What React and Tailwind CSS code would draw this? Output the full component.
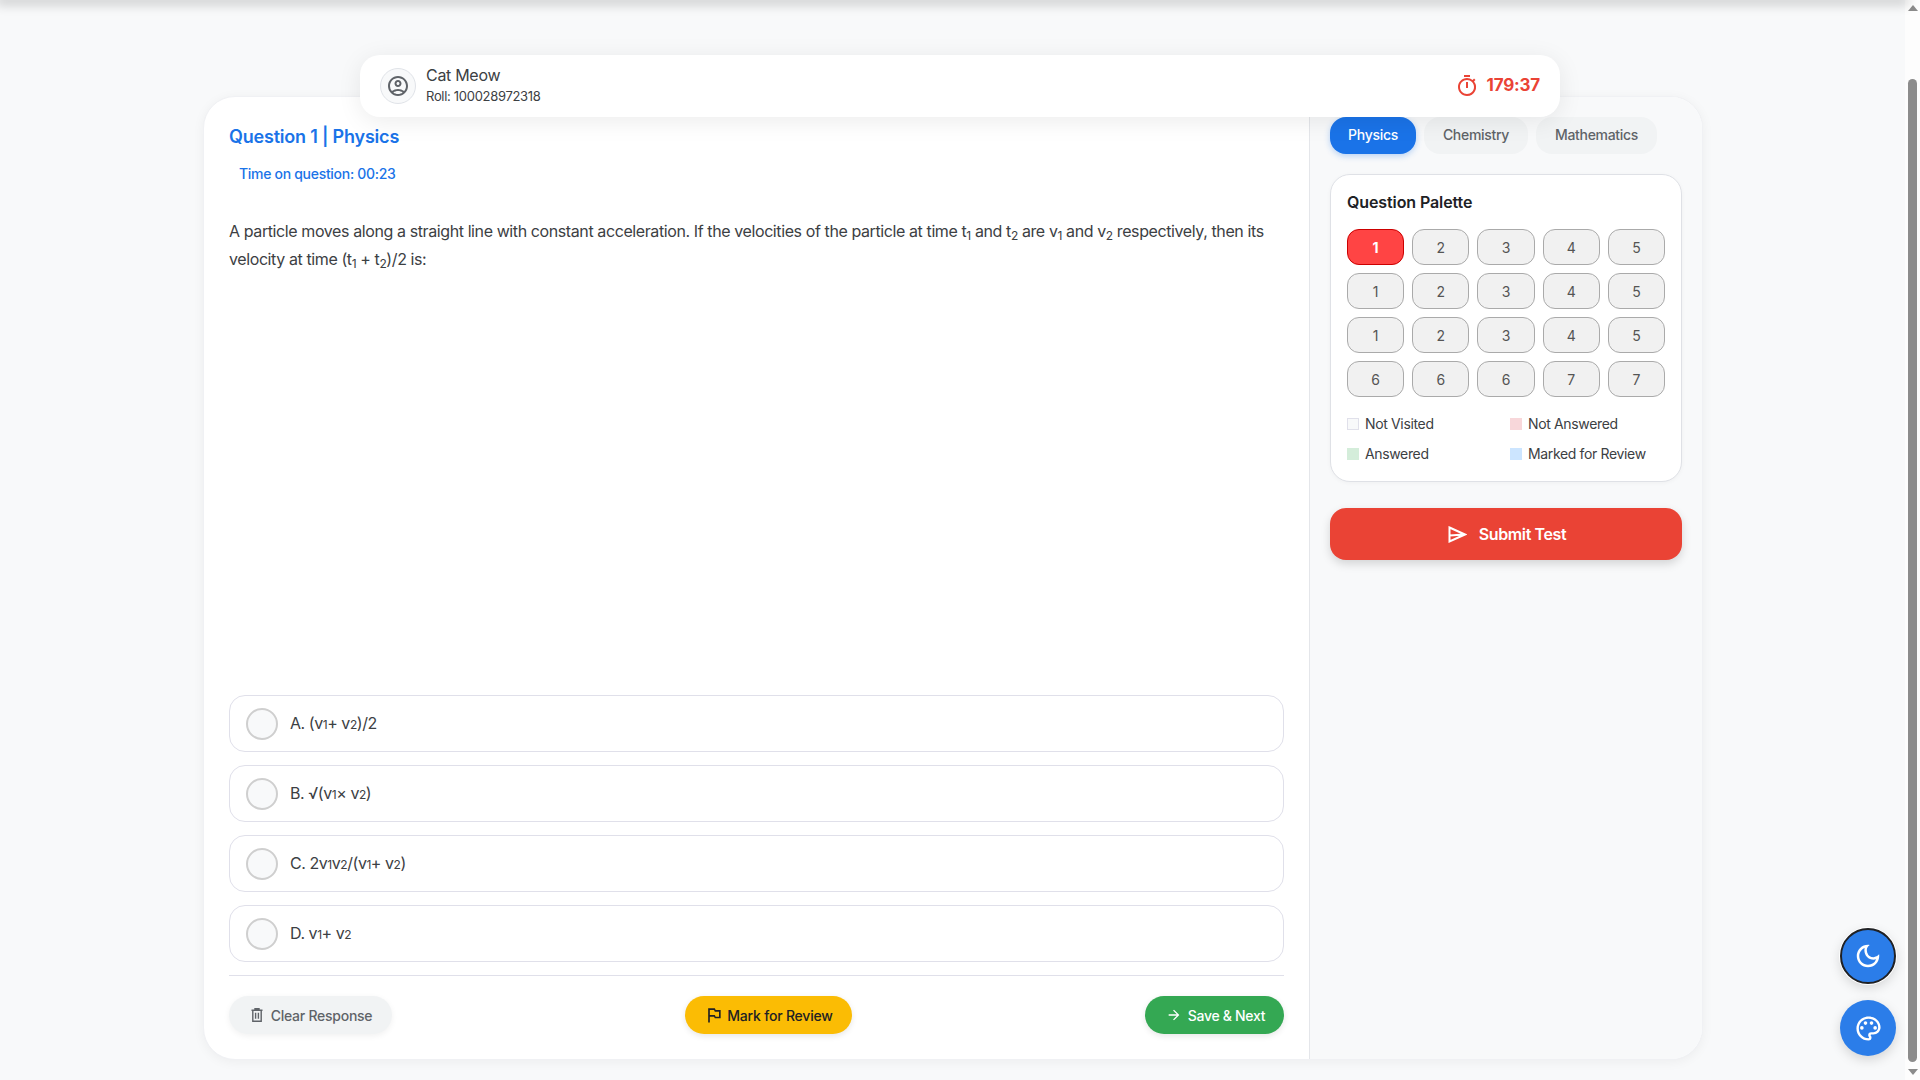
import {
  MdArrowForward,
  MdOutlineAccountCircle,
  MdOutlineDarkMode,
  MdOutlinedFlag,
  MdOutlinePalette,
  MdOutlineTimer,
} from "react-icons/md";

const rows = [
  [1, 2, 3, 4, 5],
  [1, 2, 3, 4, 5],
  [1, 2, 3, 4, 5],
  [6, 6, 6, 7, 7],
];

function V({ n }) {
  return (
    <>
      v<span className="text-[12px]">{n}</span>
    </>
  );
}

const options = [
  <>A. (<V n="1" />+ <V n="2" />)/2</>,
  <>B. √(<V n="1" />× <V n="2" />)</>,
  <>C. 2<V n="1" /><V n="2" />/(<V n="1" />+ <V n="2" />)</>,
  <>D. <V n="1" />+ <V n="2" /></>,
];

const legend = [
  ["Not Visited", "bg-[#f8f9fa] border-[#e0e0ea]"],
  ["Not Answered", "bg-[#f8d7da] border-[#f8d7da]"],
  ["Answered", "bg-[#d4edda] border-[#d4edda]"],
  ["Marked for Review", "bg-[#cce5ff] border-[#cce5ff]"],
];

function TrashIcon() {
  return (
    <svg width="12" height="14" viewBox="0 0 12 14" fill="none" stroke="currentColor" strokeWidth="1.4">
      <path d="M0.5 2.2h11M4 2.2V0.8h4v1.4M1.8 2.2V13.2h8.4V2.2M4.6 4.8v6M7.4 4.8v6" />
    </svg>
  );
}

function SendIcon() {
  return (
    <svg width="19" height="17" viewBox="0 0 19 17" fill="none" stroke="currentColor" strokeWidth="2" strokeLinejoin="miter">
      <path d="M1.5 1.5L17 8.5L1.5 15.5ZM1.5 9.5L16 8.5" />
    </svg>
  );
}

export default function App() {
  return (
    <div className="relative flex h-screen overflow-hidden bg-[#f8f9fa] font-['Inter',sans-serif] text-[#202124]">
      <main className="relative flex-1">
        {/* top bar shadow */}
        <div className="h-0 w-full shadow-[0_0_12px_4px_rgba(0,0,0,0.22)]" />

        {/* Candidate header */}
        <header className="relative z-10 ml-[360px] mt-[55px] flex h-[62px] w-[1200px] items-center justify-between rounded-[20px] bg-white pl-5 pr-5 shadow-[0_4px_24px_rgba(0,0,0,0.08)]">
          <div className="flex items-center gap-[10px]">
            <div className="flex h-9 w-9 items-center justify-center rounded-full border border-[#e0e3e8] bg-[#f8f9fa] text-[#5f6368]">
              <MdOutlineAccountCircle size={24} />
            </div>
            <div className="flex flex-col pb-[2px]">
              <span className="text-[16px] leading-[22px] tracking-[-0.3px] text-[#3c4043]">Cat Meow</span>
              <span className="text-[13px] leading-[20px] tracking-[-0.3px] text-[#3c4043]">Roll: 100028972318</span>
            </div>
          </div>
          <div className="flex items-center gap-2 text-[#ea4335]">
            <MdOutlineTimer size={24} />
            <span className="text-[17px] font-bold tracking-[-0.2px]">179:37</span>
          </div>
        </header>

        {/* Test card */}
        <div className="-mt-[21px] ml-[203px] flex h-[964px] w-[1500px] overflow-hidden rounded-[32px] border border-[#f0f1f4] bg-white shadow-[0_2px_12px_rgba(0,0,0,0.05)]">
          {/* Question column */}
          <section className="flex w-[1105px] flex-col pb-[25px] pl-[25px] pr-[25px] pt-[28px]">
            <h2 className="text-[18px] font-semibold leading-6 tracking-[-0.2px] text-[#1a73e8]">Question 1 | Physics</h2>
            <p className="ml-[10px] mt-[15px] text-[14px] font-medium leading-5 tracking-[-0.3px] text-[#1a73e8]">Time on question: 00:23</p>
            <p className="mt-[33px] text-[16px] leading-[28px] tracking-[-0.4px] text-[#3c4043]">
              A particle moves along a straight line with constant acceleration. If the velocities of the particle at time t<sub>1</sub> and t<sub>2</sub> are v<sub>1</sub> and v<sub>2</sub> respectively, then its velocity at time (t<sub>1</sub> + t<sub>2</sub>)/2 is:
            </p>

            <div className="mt-auto flex flex-col gap-[13px]">
              {options.map((opt, i) => (
                <div key={i} className="flex h-[57px] items-center gap-3 rounded-2xl border border-[#e0e0ea] bg-white pl-4 text-[16px] tracking-[-0.45px] text-[#3c4043]">
                  <span className="h-8 w-8 rounded-full border-2 border-[#cfcfcf] bg-[#f8f9fa]" />
                  <span className="pb-[2px]">{opt}</span>
                </div>
              ))}
            </div>

            <div className="mt-[13px] border-t border-[#e0e0ea] pt-[20px]">
              <div className="flex items-center justify-between">
                <button className="flex h-[38px] w-[163px] items-center justify-center gap-2 rounded-full bg-[#f1f3f4] pl-[2px] text-[14px] font-medium tracking-[-0.25px] text-[#5f6368] shadow-[0_2px_6px_rgba(0,0,0,0.06)]">
                  <TrashIcon />
                  Clear Response
                </button>
                <button className="flex h-[38px] w-[167px] items-center justify-center gap-[3px] rounded-full bg-[#fbbc04] text-[14px] font-medium tracking-[-0.2px] text-[#202124] shadow-[0_2px_6px_rgba(0,0,0,0.1)]">
                  <MdOutlinedFlag size={20} />
                  Mark for Review
                </button>
                <button className="flex h-[38px] w-[139px] items-center justify-center gap-[6px] rounded-full bg-[#34a853] pl-[2px] text-[14px] font-medium tracking-[-0.3px] text-white shadow-[0_2px_6px_rgba(0,0,0,0.1)]">
                  <MdArrowForward size={16} />
                  Save &amp; Next
                </button>
              </div>
            </div>
          </section>

          {/* Side panel */}
          <aside className="flex flex-1 flex-col border-l border-[#e4e6ea] bg-[#f8f9fa] pl-5 pr-[20px] pt-[20px]">
            <div className="flex gap-2">
              <button className="h-[37px] w-[86px] rounded-2xl bg-[#1a73e8] pb-[2px] text-[14px] font-medium tracking-[-0.3px] text-white shadow-[0_2px_6px_rgba(26,115,232,0.3)]">Physics</button>
              <button className="h-[37px] w-[104px] rounded-2xl bg-[#f1f3f4] pb-[2px] text-[14px] font-medium tracking-[-0.3px] text-[#5f6368]">Chemistry</button>
              <button className="h-[37px] w-[121px] rounded-2xl bg-[#f1f3f4] pb-[2px] text-[14px] font-medium tracking-[-0.3px] text-[#5f6368]">Mathematics</button>
            </div>

            <div className="mt-[20px] h-[308px] rounded-[20px] border border-[#dfe1e6] bg-white px-4 pt-[17px] shadow-[0_1px_4px_rgba(0,0,0,0.04)]">
              <h3 className="text-[16px] font-semibold leading-5 tracking-[-0.1px] text-[#202124]">Question Palette</h3>
              <div className="mt-[17px] grid grid-cols-5 gap-2">
                {rows.flat().map((n, i) => (
                  <button
                    key={i}
                    className={
                      i === 0
                        ? "h-9 rounded-xl border border-[#cc0000] bg-[#ff4444] text-[14px] font-bold text-white"
                        : "h-9 rounded-xl border border-[#aaaaaa] bg-[#f1f1f1] text-[14px] text-[#555555]"
                    }
                  >
                    {n}
                  </button>
                ))}
              </div>
              <div className="mt-[17px] grid grid-cols-[163px_1fr] gap-y-[10px]">
                {legend.map(([label, cls]) => (
                  <div key={label} className="flex h-5 items-center gap-[6px] text-[14px] tracking-[-0.35px] text-[#3c4043]">
                    <span className={`h-3 w-3 border ${cls}`} />
                    <span className="pb-[2px]">{label}</span>
                  </div>
                ))}
              </div>
            </div>

            <button className="mt-[26px] flex h-[52px] w-[352px] items-center justify-center gap-3 rounded-2xl bg-[#ea4335] pl-[2px] text-[16px] font-semibold tracking-[-0.4px] text-white shadow-[0_4px_10px_rgba(0,0,0,0.15)]">
              <SendIcon />
              Submit Test
            </button>
          </aside>
        </div>

        {/* Floating buttons */}
        <button className="absolute left-[1840px] top-[928px] flex h-[56px] w-[56px] items-center justify-center rounded-full border-2 border-[#202124] bg-[#2b7de9] text-white shadow-[0_0_0_1px_#fff,0_4px_12px_rgba(0,0,0,0.15)]">
          <MdOutlineDarkMode size={30} />
        </button>
        <button className="absolute left-[1840px] top-[1000px] flex h-[56px] w-[56px] items-center justify-center rounded-full bg-[#2b7de9] text-white shadow-[0_4px_12px_rgba(0,0,0,0.15)]">
          <MdOutlinePalette size={29} />
        </button>
      </main>

      {/* Scrollbar */}
      <div className="flex w-[15px] flex-col items-center bg-[#fdfdfd] pt-[5px]">
        <span className="h-0 w-0 border-x-[5px] border-b-[6px] border-x-transparent border-b-[#8c8c8c]" />
        <span className="mt-[68px] h-[983px] w-[9px] rounded-full bg-[#8c8c8c]" />
        <span className="mt-[7px] h-0 w-0 border-x-[5px] border-t-[6px] border-x-transparent border-t-[#8c8c8c]" />
      </div>
    </div>
  );
}
